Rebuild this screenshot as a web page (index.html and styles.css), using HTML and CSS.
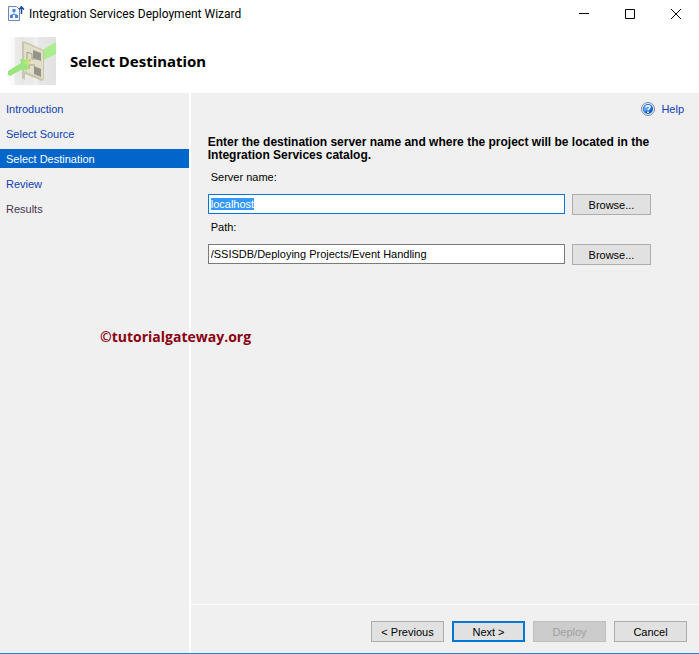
FILE: index.html
```html
<!DOCTYPE html>
<html lang="en">

<head>
  <meta charset="utf-8">
  <title>Integration Services Deployment Wizard</title>
  <link rel="stylesheet" href="styles.css">
</head>

<body>
  <div class="window">
    <div class="titlebar">
      <svg class="app-icon" width="18" height="18" viewBox="0 0 18 18">
        <path d="M1.500 1.500h8l3 3v11h-11z" fill="#f4f8fe" stroke="#7484ae" />
        <path d="M7 6v3M4.500 11V9.500h5V11" fill="none" stroke="#6f9fe0" />
        <path d="M5.500 4h3v3h-3zM3 10h3v3H3zM8 10h3v3H8z" fill="#4584dc" />
        <path d="M14.500 9V1M12 4.500L14.500 2 17 4.500" fill="none" stroke="#174b96" stroke-width="1.500" />
      </svg>
      <span class="title">Integration Services Deployment Wizard</span>
      <div class="window-controls">
        <button type="button" aria-label="Minimize">
          <svg width="12" height="12" viewBox="0 0 12 12"><path d="M1 5.500h10" /></svg>
        </button>
        <button type="button" aria-label="Maximize">
          <svg width="12" height="12" viewBox="0 0 12 12"><path d="M1.500 1.500h9v9h-9z" /></svg>
        </button>
        <button type="button" aria-label="Close">
          <svg width="12" height="12" viewBox="0 0 12 12"><path d="M1 1l10 10M11 1L1 11" /></svg>
        </button>
      </div>
    </div>

    <header class="page-header">
      <svg class="header-icon" width="48" height="48" viewBox="0 0 48 48">
        <defs>
          <linearGradient id="wall" x1="0" x2="1">
            <stop offset="0" stop-color="#fff" />
            <stop offset="0.300" stop-color="#ececec" />
            <stop offset="1" stop-color="#e2e2e2" />
          </linearGradient>
        </defs>
        <path d="M0 0h48v48H0z" fill="url(#wall)" />
        <path d="M7 0h9v48H7z" fill="#e6e7e4" opacity="0.700" />
        <path d="M25 0h5v48h-5z" fill="#f6f6f6" opacity="0.500" />
        <path d="M14 5l2-1 20 9v29l-2 2-17-7v6l-3-2z" fill="#c9c6ae" />
        <path d="M16 6l19 8v28l-19-8z" fill="#e2dfc8" />
        <path d="M19 22v-7l5 2v5M24 22h6M21 32v-4h6" fill="none" stroke="#a3a18e" />
        <path d="M25 13l8 3v8l-8-3zM26 29l7 3v8l-7-3z" fill="#94948a" />
        <path d="M36 12l12-7v12l-12 6z" fill="#aaee90" />
        <path d="M0 34l13-8-1-4 10 1-3 11-4-2-13 7-2-1z" fill="#9ae67e" />
        <path d="M15 25l7-2-2 6z" fill="#c2e672" />
        <circle cx="22" cy="23" r="1" fill="#f0b060" />
      </svg>
      <h1>Select Destination</h1>
    </header>

    <div class="wizard">
      <nav class="steps">
        <a href="#">Introduction</a>
        <a href="#">Select Source</a>
        <a href="#" class="active">Select Destination</a>
        <a href="#">Review</a>
        <a href="#" class="visited">Results</a>
      </nav>

      <main class="content">
        <div class="help">
          <a href="#">
            <svg width="14" height="14" viewBox="0 0 14 14">
              <circle cx="7" cy="7" r="6.500" fill="#e6edf8" stroke="#7784ae" />
              <circle cx="7" cy="7" r="5" fill="#1763cf" />
              <path d="M3 5a4.500 4.500 0 0 1 7-1L4 10a5 5 0 0 1-1-5z" fill="#5da5ef" />
              <path d="M5 5.500C5 3.300 9 3.300 9 5.500 9 7 7 6.800 7 8.500" fill="none" stroke="#fff" stroke-width="1.500" />
              <path d="M6.200 9.500h1.600V11H6.200z" fill="#fff" />
            </svg>
            Help
          </a>
        </div>

        <form class="destination">
          <h2>Enter the destination server name and where the project will be located in the Integration Services catalog.</h2>
          <label for="server">Server name:</label>
          <div class="field">
            <input type="text" id="server" value="localhost">
            <button type="button" class="btn">Browse...</button>
          </div>
          <label for="path">Path:</label>
          <div class="field">
            <input type="text" id="path" value="/SSISDB/Deploying Projects/Event Handling">
            <button type="button" class="btn">Browse...</button>
          </div>
        </form>

        <footer class="actions">
          <button type="button" class="btn">&lt; Previous</button>
          <button type="button" class="btn default">Next &gt;</button>
          <button type="button" class="btn" disabled>Deploy</button>
          <button type="button" class="btn">Cancel</button>
        </footer>
      </main>

      <div class="watermark">©tutorialgateway.org</div>
    </div>
  </div>

  <script>
    const server = document.querySelector("#server");
    server.focus();
    server.select();
  </script>
</body>

</html>
```

FILE: styles.css
```css
* {
  box-sizing: border-box;
}

body {
  margin: 0;
  background: #fff;
  color: #000;
  font-family: "Liberation Sans", Arial, sans-serif;
  font-size: 11px;
}

.window {
  min-height: 100vh;
  display: flex;
  flex-direction: column;
  border-bottom: 1px solid #1883d7;
}

.titlebar {
  display: flex;
  align-items: center;
  height: 28px;
  padding-left: 7px;
}

.title {
  margin-left: 4px;
  font-family: Roboto, "Segoe UI", sans-serif;
  font-size: 12px;
}

.window-controls {
  display: flex;
  margin-left: auto;
}

.window-controls button {
  display: flex;
  align-items: center;
  justify-content: center;
  width: 46px;
  height: 28px;
  padding: 0;
  border: none;
  background: transparent;
}

.window-controls path {
  fill: none;
  stroke: #000;
}

.page-header {
  display: flex;
  align-items: center;
  gap: 14px;
  height: 65px;
  padding-left: 8px;
}

h1 {
  margin: 0;
  font-family: "Noto Sans", Tahoma, sans-serif;
  font-size: 15px;
  font-weight: bold;
}

.wizard {
  position: relative;
  flex: 1;
  display: flex;
  background: #fff;
}

.steps {
  flex: 0 0 27%;
  display: flex;
  flex-direction: column;
  gap: 6px;
  padding-top: 6px;
  background: #f0f0f0;
}

a {
  color: #0f3fb0;
  text-decoration: none;
}

.steps a {
  height: 19px;
  padding-left: 6px;
  line-height: 20px;
}

.steps a.active {
  background: #0066cc;
  color: #fff;
}

.steps a.visited {
  color: #4a3450;
}

.content {
  flex: 1;
  display: flex;
  flex-direction: column;
  margin-left: 2px;
  background: #f0f0f0;
}

.help {
  display: flex;
  justify-content: flex-end;
  padding: 9px 15px 0 0;
}

.help a {
  display: flex;
  align-items: center;
  gap: 6px;
}

.destination {
  flex: 1;
  padding: 20px 48px 0 17px;
}

h2 {
  margin: 0 0 8px;
  font-size: 12px;
  line-height: 13px;
}

label {
  display: block;
  padding-left: 3px;
  line-height: 14px;
}

.field {
  display: flex;
  align-items: flex-start;
  gap: 7px;
  margin: 10px 0 5px;
}

input {
  flex: 1;
  min-width: 0;
  height: 20px;
  padding: 0 2px;
  border: 1px solid #7a7a7a;
  background: #fff;
  font: inherit;
}

input:focus {
  border-color: #0078d7;
  outline: none;
}

input::selection {
  background: #3399ff;
  color: #fff;
}

.btn {
  width: 73px;
  height: 21px;
  padding: 0;
  border: 1px solid #adadad;
  background: #e1e1e1;
  color: #000;
  font: inherit;
}

.field .btn {
  width: 79px;
}

.btn.default {
  border: 2px solid #0078d7;
}

.btn:disabled {
  border-color: #bfbfbf;
  background: #cccccc;
  color: #a0a0a0;
}

.actions {
  display: flex;
  justify-content: flex-end;
  gap: 8px;
  padding: 16px 12px 11px;
  border-top: 1px solid #fff;
}

.watermark {
  position: absolute;
  top: 234px;
  left: 100px;
  color: #8b0010;
  font-family: "Open Sans", sans-serif;
  font-size: 14px;
  font-weight: bold;
}
```
